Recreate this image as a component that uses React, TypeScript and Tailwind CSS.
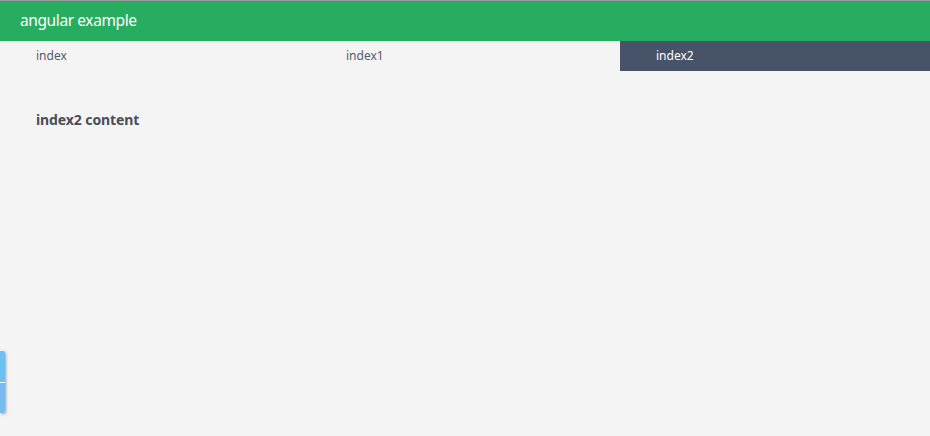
import React, { useState } from 'react';

const TABS = ['index', 'index1', 'index2'];

export default function App() {
  const [active, setActive] = useState(2);

  return (
    <div
      className="relative h-[436px] w-[930px] overflow-hidden bg-[#f4f4f4] border-t border-[#9a9a9a]"
      style={{ fontFamily: '"Noto Sans", "DejaVu Sans", sans-serif' }}
    >
      {/* Header bar */}
      <header className="flex h-10 items-center bg-[#26ad60] px-5">
        <h1 className="text-[15.5px] tracking-[-0.4px] text-white">angular example</h1>
      </header>

      {/* Tab strip */}
      <nav className="grid h-[30px] grid-cols-3">
        {TABS.map((tab, i) => (
          <button
            key={tab}
            type="button"
            onClick={() => setActive(i)}
            className={
              i === active
                ? 'flex items-center bg-[#465369] pl-9 text-[12px] text-white'
                : 'flex items-center pl-9 text-[12px] text-[#555a66]'
            }
          >
            {tab}
          </button>
        ))}
      </nav>

      {/* Tab content */}
      <main className="px-9 pt-[38px]">
        <h2 className="text-[14px] font-bold tracking-[-0.1px] text-[#484d58]">{TABS[active]} content</h2>
      </main>

      {/* Side feedback handle */}
      <div className="absolute left-0 top-[350px] flex h-[62px] w-[5px] flex-col overflow-hidden rounded-r-[2px] shadow-[1px_1px_3px_rgba(0,0,0,0.35)]">
        <div className="flex-1 bg-[#6cc0f2]" />
        <div className="h-px bg-white" />
        <div className="flex-1 bg-[#78bcef]" />
      </div>
    </div>
  );
}
